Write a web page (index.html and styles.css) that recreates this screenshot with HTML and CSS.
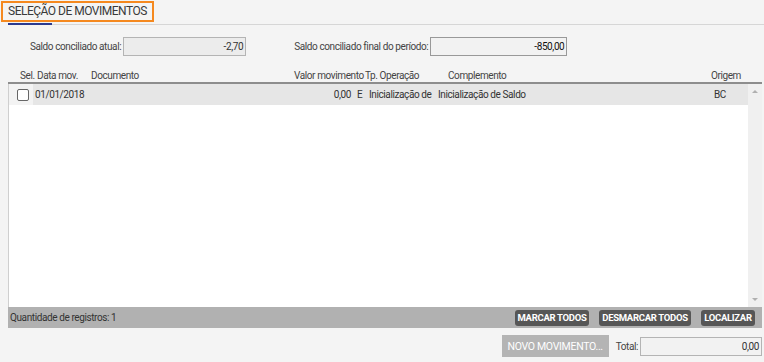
FILE: index.html
```html
<!DOCTYPE html>
<html>
<head>
    <title>Seleção de movimentos</title>
    <link rel="stylesheet" href="styles.css">
</head>
<body>
    <div class="tabs">
        <div class="tab">SELEÇÃO DE MOVIMENTOS</div>
    </div>
    <div class="tab-rule">
        <div class="tab-ink"></div>
        <div class="tab-line"></div>
    </div>

    <div class="saldos">
        <label class="lbl">Saldo conciliado atual:</label>
        <div class="field field-atual">-2,70</div>
        <label class="lbl lbl-final">Saldo conciliado final do período:</label>
        <div class="field field-final">-850,00</div>
    </div>

    <div class="grid">
        <div class="grid-head">
            <div class="h-sel">Sel.</div>
            <div class="h-data">Data mov.</div>
            <div class="h-doc">Documento</div>
            <div class="h-valor">Valor movimento</div>
            <div class="h-tp">Tp. Operação</div>
            <div class="h-compl">Complemento</div>
            <div class="h-orig">Origem</div>
        </div>
        <div class="grid-body">
            <div class="rows">
                <div class="row">
                    <div class="c-sel"><span class="check"></span></div>
                    <div class="c-data">01/01/2018</div>
                    <div class="c-doc"></div>
                    <div class="c-valor">0,00</div>
                    <div class="c-tp">E</div>
                    <div class="c-op">Inicialização de</div>
                    <div class="c-compl">Inicialização de Saldo</div>
                    <div class="c-orig">BC</div>
                </div>
            </div>
            <div class="scroll">
                <span class="arrow up"></span>
                <span class="arrow down"></span>
            </div>
        </div>
        <div class="grid-foot">
            <span class="count">Quantidade de registros: 1</span>
            <div class="actions">
                <button class="btn btn-marcar">MARCAR TODOS</button>
                <button class="btn btn-desmarcar">DESMARCAR TODOS</button>
                <button class="btn btn-localizar">LOCALIZAR</button>
            </div>
        </div>
    </div>

    <div class="bottom">
        <button class="btn-novo">NOVO MOVIMENTO...</button>
        <label class="lbl">Total:</label>
        <div class="field field-total">0,00</div>
    </div>
</body>
</html>
```

FILE: styles.css
```css
body {
    margin: 0;
    background: #f4f4f4;
    font-family: Roboto, "Liberation Sans", sans-serif;
    font-size: 10px;
    letter-spacing: -0.4px;
    color: #333;
}

/* tab strip */
.tabs {
    height: 23px;
    display: flex;
}

.tab {
    margin: 1px 0 0 1px;
    border: 2px solid #f5891f;
    padding: 0 5px;
    height: 17px;
    line-height: 17px;
    font-size: 12px;
    letter-spacing: -0.5px;
    color: #3a3a3a;
}

.tab-rule {
    display: flex;
    height: 2px;
}

.tab-ink {
    width: 44px;
    margin-left: 8px;
    background: #2b3a8e;
}

.tab-line {
    flex: 1;
    border-bottom: 1px solid #d6d6d6;
}

/* saldo fields */
.saldos {
    display: flex;
    align-items: center;
    margin-top: 12px;
    padding-left: 30px;
}

.lbl {
    margin-right: 2px;
    color: #444;
}

.lbl-final {
    margin-left: 48px;
}

.field {
    height: 17px;
    line-height: 17px;
    border: 1px solid #b4b4b4;
    background: #ececec;
    text-align: right;
    padding-right: 2px;
    color: #333;
}

.field-atual {
    width: 119px;
}

.field-final {
    width: 133px;
    border-color: #999;
    background: #f2f2f2;
    color: #111;
}

/* grid */
.grid {
    margin: 13px 2px 0 8px;
}

.grid-head {
    display: flex;
    height: 13px;
    line-height: 13px;
    border-bottom: 2px solid #8d8d8d;
    color: #444;
    white-space: nowrap;
}

.h-sel { width: 15px; padding-left: 12px; }
.h-data { width: 54px; padding-left: 2px; }
.h-doc { width: 203px; }
.h-valor { width: 69px; text-align: right; padding-right: 1px; }
.h-tp { width: 82px; padding-left: 1px; }
.h-compl { width: 261px; padding-left: 1px; }
.h-orig { padding-left: 2px; }

.grid-body {
    display: flex;
    height: 223px;
    border-left: 1px solid #cfcfcf;
}

.rows {
    flex: 1;
    background: #fff;
}

.row {
    display: flex;
    height: 21px;
    line-height: 21px;
    background: #e6e6e6;
}

.row > div {
    white-space: nowrap;
    overflow: hidden;
}

.c-sel {
    width: 24px;
    display: flex;
    align-items: center;
    background: #f3f3f3;
}

.check {
    width: 10px;
    height: 10px;
    margin-left: 8px;
    border: 1px solid #666;
    border-radius: 2px;
    background: #fff;
}

.c-data { width: 56px; padding-left: 2px; }
.c-doc { width: 205px; }
.c-valor { width: 55px; text-align: right; padding-right: 2px; }
.c-tp { width: 9px; padding-left: 4px; }
.c-op { width: 67px; padding-left: 3px; }
.c-compl { width: 273px; padding-left: 2px; }
.c-orig { width: 33px; padding-left: 3px; }

.scroll {
    width: 14px;
    background: #f0f0f0;
    display: flex;
    flex-direction: column;
    justify-content: space-between;
    align-items: center;
    padding: 6px 0;
}

.arrow {
    width: 0;
    height: 0;
    border-left: 3px solid transparent;
    border-right: 3px solid transparent;
}

.arrow.up { border-bottom: 3px solid #b0b0b0; }
.arrow.down { border-top: 3px solid #b0b0b0; }

.grid-foot {
    display: flex;
    align-items: center;
    justify-content: space-between;
    height: 21px;
    background: #b1b1b1;
    padding: 0 7px 0 2px;
}

.count {
    color: #333;
}

.actions {
    display: flex;
    gap: 10px;
}

.btn {
    height: 16px;
    padding: 0;
    border: none;
    border-radius: 3px;
    background: #565656;
    color: #fff;
    font-family: Roboto, "Liberation Sans", sans-serif;
    font-size: 9.5px;
    letter-spacing: -0.3px;
    font-weight: bold;
    white-space: nowrap;
}

.btn-marcar { width: 74px; }
.btn-desmarcar { width: 92px; }
.btn-localizar { width: 54px; }

/* bottom row */
.bottom {
    display: flex;
    align-items: center;
    justify-content: flex-end;
    margin: 7px 2px 0 0;
}

.btn-novo {
    height: 22px;
    width: 107px;
    margin-right: 7px;
    padding: 0;
    border: none;
    background: #b4b4b4;
    color: #fff;
    font-family: Roboto, "Liberation Sans", sans-serif;
    font-size: 10.5px;
    letter-spacing: -0.3px;
    white-space: nowrap;
}

.field-total {
    width: 118px;
    background: #f2f2f2;
}
```
